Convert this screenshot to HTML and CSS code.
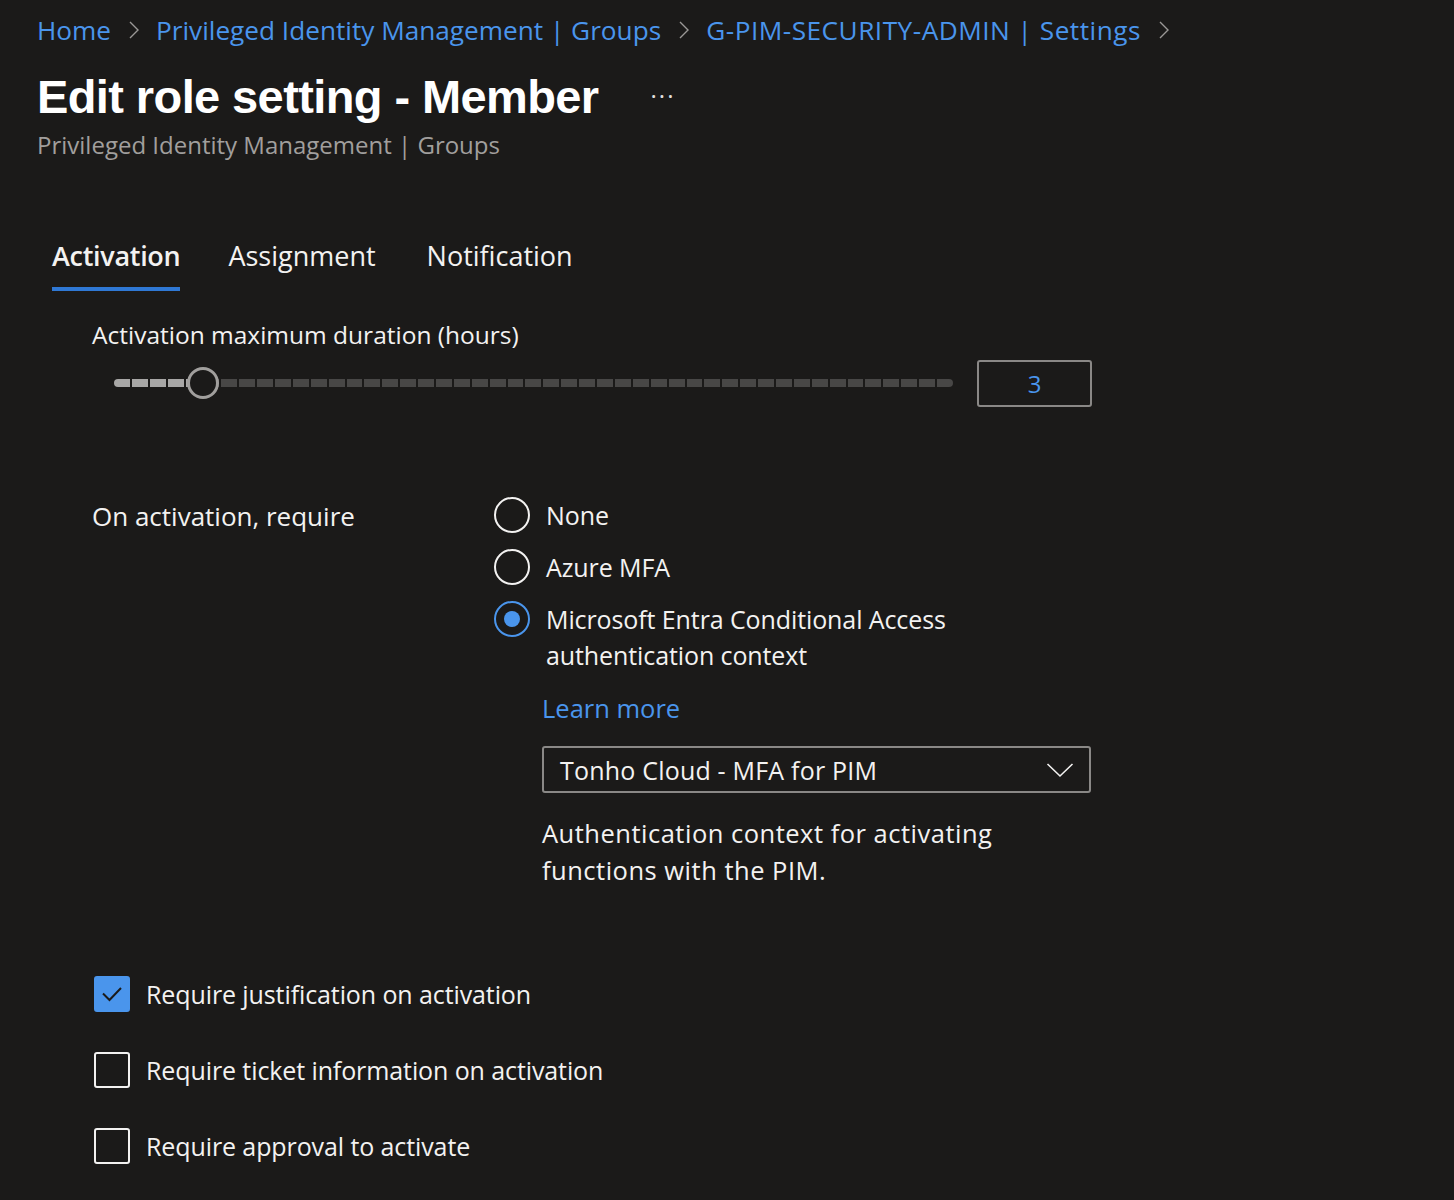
FILE: index.html
```html
<!DOCTYPE html>
<html>
<head>
<meta charset="utf-8">
<link rel="stylesheet" href="styles.css">
</head>
<body>
<div class="page">
  <nav class="breadcrumb">
    <a class="crumb">Home</a>
    <span class="sep"><svg width="12" height="22" viewBox="0 0 12 22"><path d="M2 3 L10 11 L2 19" fill="none" stroke="#9a9896" stroke-width="1.4"/></svg></span>
    <a class="crumb">Privileged Identity Management | Groups</a>
    <span class="sep"><svg width="12" height="22" viewBox="0 0 12 22"><path d="M2 3 L10 11 L2 19" fill="none" stroke="#9a9896" stroke-width="1.4"/></svg></span>
    <a class="crumb wide">G-PIM-SECURITY-ADMIN | Settings</a>
    <span class="sep"><svg width="12" height="22" viewBox="0 0 12 22"><path d="M2 3 L10 11 L2 19" fill="none" stroke="#9a9896" stroke-width="1.4"/></svg></span>
  </nav>

  <header class="title-row">
    <h1 class="title">Edit role setting - Member</h1>
    <span class="more">···</span>
  </header>
  <div class="subtitle">Privileged Identity Management | Groups</div>

  <div class="tabs">
    <div class="tab active">Activation</div>
    <div class="tab">Assignment</div>
    <div class="tab">Notification</div>
  </div>

  <section class="content">
    <div class="field-label">Activation maximum duration (hours)</div>
    <div class="slider-row">
      <div class="slider">
        <div class="track">
          <span class="seg on first"></span><span class="seg on"></span><span class="seg on"></span><span class="seg on"></span><span class="seg on"></span>
          <span class="seg"></span><span class="seg"></span><span class="seg"></span><span class="seg"></span><span class="seg"></span>
          <span class="seg"></span><span class="seg"></span><span class="seg"></span><span class="seg"></span><span class="seg"></span>
          <span class="seg"></span><span class="seg"></span><span class="seg"></span><span class="seg"></span><span class="seg"></span>
          <span class="seg"></span><span class="seg"></span><span class="seg"></span><span class="seg"></span><span class="seg"></span>
          <span class="seg"></span><span class="seg"></span><span class="seg"></span><span class="seg"></span><span class="seg"></span>
          <span class="seg"></span><span class="seg"></span><span class="seg"></span><span class="seg"></span><span class="seg"></span>
          <span class="seg"></span><span class="seg"></span><span class="seg"></span><span class="seg"></span><span class="seg"></span>
          <span class="seg"></span><span class="seg"></span><span class="seg"></span><span class="seg"></span><span class="seg"></span>
          <span class="seg"></span><span class="seg last"></span>
        </div>
        <span class="thumb" style="left: 10.6%"></span>
      </div>
      <div class="num-input">3</div>
    </div>

    <div class="require-row">
      <div class="require-label">On activation, require</div>
      <div class="options">
        <label class="radio"><span class="circle"></span><span class="rlabel">None</span></label>
        <label class="radio"><span class="circle"></span><span class="rlabel">Azure MFA</span></label>
        <label class="radio checked"><span class="circle"><span class="dot"></span></span><span class="rlabel">Microsoft Entra Conditional Access<br>authentication context</span></label>
        <div class="sub">
          <a class="learn">Learn more</a>
          <div class="dropdown">
            <span>Tonho Cloud - MFA for PIM</span>
            <svg width="28" height="16" viewBox="0 0 28 16"><path d="M1.5 2 L14 14 L26.5 2" fill="none" stroke="#f3f2f1" stroke-width="1.6"/></svg>
          </div>
          <p class="help">Authentication context for activating<br>functions with the PIM.</p>
        </div>
      </div>
    </div>

    <div class="checks">
      <label class="check checked"><span class="box"><svg width="24" height="18" viewBox="0 0 24 18"><path d="M3 8.5 L9.5 15 L21 3" fill="none" stroke="#1b1a19" stroke-width="2"/></svg></span><span>Require justification on activation</span></label>
      <label class="check"><span class="box"></span><span>Require ticket information on activation</span></label>
      <label class="check"><span class="box"></span><span>Require approval to activate</span></label>
    </div>
  </section>
</div>
</body>
</html>
```

FILE: styles.css
```css
* { box-sizing: border-box; }
html, body { margin: 0; padding: 0; background: #1b1a19; }
body {
  font-family: "Open Sans", "Noto Sans", sans-serif;
  color: #f3f2f1;
  width: 1454px;
  height: 1200px;
  overflow: hidden;
}
.page { padding: 10px 0 0 37px; }

.breadcrumb {
  display: flex;
  align-items: center;
  height: 40px;
  font-size: 26.2px;
}
.crumb { color: #4a95ec; text-decoration: none; }
.crumb.wide { letter-spacing: 0.5px; }
.sep { display: flex; align-items: center; margin: 0 16px 0 17px; }

.title-row {
  display: flex;
  align-items: center;
  margin-top: 18px;
  height: 56px;
}
.title {
  margin: 0;
  font-family: "Liberation Sans", Arial, sans-serif;
  font-weight: 700;
  font-size: 47px;
  letter-spacing: -0.6px;
  color: #ffffff;
}
.more {
  margin-left: 52px;
  font-size: 24px;
  color: #e0dfdd;
  letter-spacing: 2px;
  position: relative;
  top: -1px;
}
.subtitle {
  margin-top: 4px;
  font-size: 24px;
  color: #a19f9d;
}

.tabs {
  display: flex;
  margin-top: 76px;
  margin-left: 15px;
  gap: 48px;
}
.tab {
  font-size: 27px;
  padding-bottom: 13px;
  border-bottom: 4px solid transparent;
}
.tab + .tab + .tab { margin-left: 3px; }
.tab.active { font-weight: 600; border-bottom-color: #2f78d4; letter-spacing: -0.3px; }

.content { padding-left: 55px; }
.field-label {
  margin-top: 27px;
  font-size: 24.5px;
}
.slider-row {
  display: flex;
  align-items: center;
  margin-top: 8px;
  height: 48px;
}
.slider {
  position: relative;
  margin-left: 22px;
  width: 839px;
  height: 32px;
  display: flex;
  align-items: center;
}
.track {
  display: flex;
  width: 100%;
  height: 8px;
  gap: 2px;
}
.seg { flex: 1; background: #484746; }
.seg.on { background: #a8a7a6; }
.seg.first { border-radius: 4px 0 0 4px; }
.seg.last { border-radius: 0 4px 4px 0; }
.thumb {
  position: absolute;
  top: 0;
  width: 32px;
  height: 32px;
  margin-left: -16px;
  border-radius: 50%;
  border: 3px solid #a19f9d;
  background: #1b1a19;
}
.num-input {
  margin-left: 24px;
  width: 115px;
  height: 47px;
  border: 2px solid #8a8886;
  border-radius: 3px;
  display: flex;
  align-items: center;
  justify-content: center;
  color: #4a95ec;
  font-size: 24px;
}

.require-row {
  display: flex;
  margin-top: 88px;
}
.require-label {
  width: 402px;
  font-size: 26px;
  padding-top: 3px;
}
.options { display: flex; flex-direction: column; margin-top: 2px; }
.radio {
  display: flex;
  align-items: flex-start;
  gap: 16px;
  font-size: 25px;
  line-height: 36px;
  margin-bottom: 16px;
  letter-spacing: -0.1px;
}
.circle {
  width: 36px;
  height: 36px;
  border-radius: 50%;
  border: 2px solid #f3f2f1;
  display: flex;
  align-items: center;
  justify-content: center;
  flex: none;
}
.radio.checked .circle { border-color: #4a95ec; }
.dot { width: 16px; height: 16px; border-radius: 50%; background: #4a95ec; }

.sub { padding-left: 48px; margin-top: 1px; }
.learn {
  display: block;
  color: #4a95ec;
  font-size: 25.5px;
  line-height: 36px;
}
.dropdown {
  margin-top: 20px;
  width: 549px;
  height: 47px;
  border: 2px solid #8a8886;
  border-radius: 3px;
  display: flex;
  align-items: center;
  justify-content: space-between;
  padding: 0 15px 0 16px;
  font-size: 25px;
  letter-spacing: 0.2px;
}
.help {
  margin: 22px 0 0 0;
  font-size: 25.5px;
  line-height: 37px;
  letter-spacing: 0.5px;
}

.checks {
  margin-top: 87px;
  display: flex;
  flex-direction: column;
  gap: 40px;
  padding-left: 2px;
}
.check {
  display: flex;
  align-items: center;
  gap: 16px;
  font-size: 25px;
  height: 36px;
  letter-spacing: -0.1px;
}
.box {
  width: 36px;
  height: 36px;
  border: 2px solid #f3f2f1;
  border-radius: 3px;
  display: flex;
  align-items: center;
  justify-content: center;
  flex: none;
}
.check.checked .box { background: #4a95ec; border-color: #4a95ec; }
```
